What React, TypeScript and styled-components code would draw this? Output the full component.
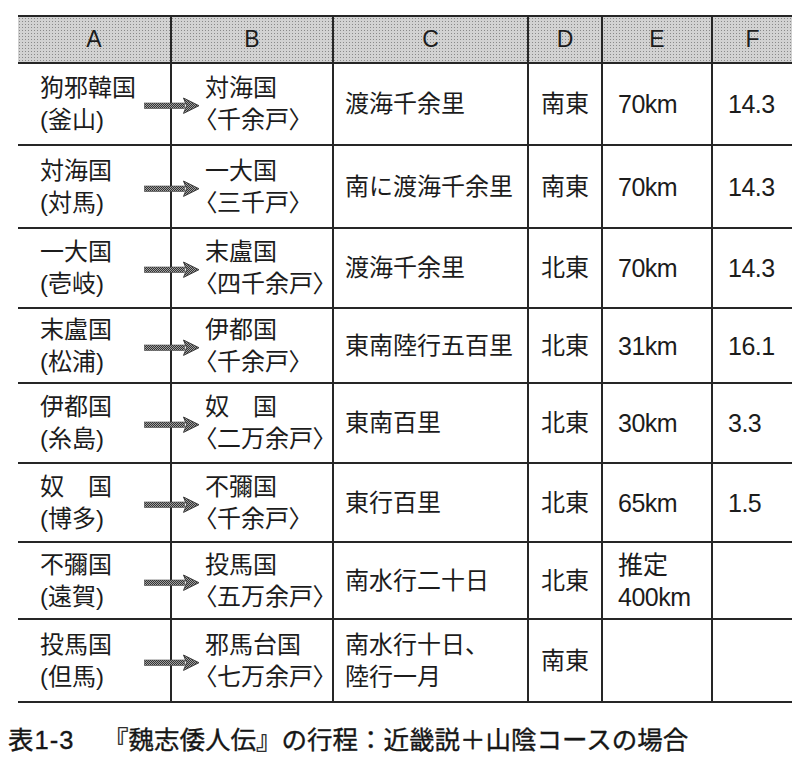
import styled, { createGlobalStyle } from "styled-components";

const GlobalStyle = createGlobalStyle`
  body {
    margin: 0;
    background: #fff;
    color: #1c1c1c;
    font-family: "Liberation Sans", "Noto Sans CJK JP", sans-serif;
  }
`;

const COLS = "152px 162px 195px 74px 110px 81px";

const Page = styled.div`
  width: 800px;
  height: 768px;
  padding-top: 15px;
  box-sizing: border-box;
`;

const Table = styled.div`
  margin-left: 18px;
  width: 774px;
  border-top: 2px solid #262626;
`;

const HeaderRow = styled.div`
  display: grid;
  grid-template-columns: ${COLS};
  height: 47px;
  box-sizing: border-box;
  border-bottom: 2px solid #262626;
  background-color: #d2d2d2;
  background-image: radial-gradient(#8a8a8a 0.75px, transparent 0.85px);
  background-size: 3px 3px;
`;

const HeaderCell = styled.div<{ $first?: boolean }>`
  display: flex;
  align-items: center;
  justify-content: center;
  font-size: 23px;
  border-left: ${({ $first }) => ($first ? "none" : "2px solid #262626")};
`;

const Row = styled.div<{ $h: number }>`
  display: grid;
  grid-template-columns: ${COLS};
  height: ${({ $h }) => $h}px;
  box-sizing: border-box;
  border-bottom: 2px solid #262626;
`;

const Cell = styled.div<{
  $first?: boolean;
  $pad?: number;
  $center?: boolean;
  $size?: number;
}>`
  position: relative;
  display: flex;
  flex-direction: column;
  justify-content: center;
  align-items: ${({ $center }) => ($center ? "center" : "flex-start")};
  padding-left: ${({ $pad }) => $pad ?? 0}px;
  font-size: ${({ $size }) => $size ?? 24}px;
  line-height: 32px;
  white-space: nowrap;
  border-left: ${({ $first }) => ($first ? "none" : "2px solid #262626")};
`;

const Line = styled.span<{ $palt?: boolean }>`
  display: block;
  font-feature-settings: ${({ $palt }) => ($palt ? '"palt"' : "normal")};
`;

const Num = styled.span`
  display: block;
  letter-spacing: -0.5px;
`;

const ArrowBox = styled.svg`
  position: absolute;
  left: -28px;
  top: 50%;
  margin-top: -7px;
  width: 56px;
  height: 17px;
`;

const Caption = styled.div`
  margin: 20px 0 0 8px;
  font-size: 25.5px;
  line-height: 34px;
  font-weight: 400;
  -webkit-text-stroke: 0.35px #161616;
  color: #161616;
  white-space: nowrap;
`;

const CaptionLabel = styled.span`
  letter-spacing: 1px;
  margin-right: 16px;
`;

function Arrow() {
  return (
    <ArrowBox viewBox="0 0 56 17">
      <defs>
        <pattern id="dots" width="2" height="2" patternUnits="userSpaceOnUse">
          <rect width="2" height="2" fill="#a0a0a0" />
          <rect width="1" height="1" fill="#333" />
          <rect x="1" y="1" width="1" height="1" fill="#333" />
        </pattern>
      </defs>
      <rect x="0.5" y="6" width="40" height="5.5" fill="url(#dots)" stroke="#444" strokeWidth="0.6" />
      <polygon points="39.5,1 55,8.7 39.5,16.4 42.5,8.7" fill="url(#dots)" stroke="#333" strokeWidth="0.9" />
    </ArrowBox>
  );
}

type RowData = {
  a: string[];
  b: string[];
  c: string[];
  d: string;
  e: string[];
  f: string;
  h: number;
};

const rows: RowData[] = [
  { a: ["狗邪韓国", "(釜山)"], b: ["対海国", "〈千余戸〉"], c: ["渡海千余里"], d: "南東", e: ["70km"], f: "14.3", h: 82 },
  { a: ["対海国", "(対馬)"], b: ["一大国", "〈三千戸〉"], c: ["南に渡海千余里"], d: "南東", e: ["70km"], f: "14.3", h: 83 },
  { a: ["一大国", "(壱岐)"], b: ["末盧国", "〈四千余戸〉"], c: ["渡海千余里"], d: "北東", e: ["70km"], f: "14.3", h: 80 },
  { a: ["末盧国", "(松浦)"], b: ["伊都国", "〈千余戸〉"], c: ["東南陸行五百里"], d: "北東", e: ["31km"], f: "16.1", h: 75 },
  { a: ["伊都国", "(糸島)"], b: ["奴　国", "〈二万余戸〉"], c: ["東南百里"], d: "北東", e: ["30km"], f: "3.3", h: 80 },
  { a: ["奴　国", "(博多)"], b: ["不彌国", "〈千余戸〉"], c: ["東行百里"], d: "北東", e: ["65km"], f: "1.5", h: 79 },
  { a: ["不彌国", "(遠賀)"], b: ["投馬国", "〈五万余戸〉"], c: ["南水行二十日"], d: "北東", e: ["推定", "400km"], f: "", h: 77 },
  { a: ["投馬国", "(但馬)"], b: ["邪馬台国", "〈七万余戸〉"], c: ["南水行十日、", "陸行一月"], d: "南東", e: [], f: "", h: 83 },
];

const headers = ["A", "B", "C", "D", "E", "F"];

export default function App() {
  return (
    <Page>
      <GlobalStyle />
      <Table>
        <HeaderRow>
          {headers.map((h, i) => (
            <HeaderCell key={h} $first={i === 0}>
              {h}
            </HeaderCell>
          ))}
        </HeaderRow>
        {rows.map((r, i) => (
          <Row key={i} $h={r.h}>
            <Cell $first $pad={22}>
              {r.a.map((t) => (
                <Line key={t}>{t}</Line>
              ))}
            </Cell>
            <Cell $pad={33}>
              <Arrow />
              <Line>{r.b[0]}</Line>
              <Line $palt>{r.b[1]}</Line>
            </Cell>
            <Cell $pad={11}>
              {r.c.map((t) => (
                <Line key={t}>{t}</Line>
              ))}
            </Cell>
            <Cell $center>
              <Line>{r.d}</Line>
            </Cell>
            <Cell $pad={15} $size={25}>
              {r.e.map((t) =>
                /km/.test(t) ? <Num key={t}>{t}</Num> : <Line key={t}>{t}</Line>
              )}
            </Cell>
            <Cell $pad={15} $size={25}>
              <Num>{r.f}</Num>
            </Cell>
          </Row>
        ))}
      </Table>
      <Caption>
        <CaptionLabel>表1-3</CaptionLabel>　『魏志倭人伝』の行程：近畿説＋山陰コースの場合
      </Caption>
    </Page>
  );
}
